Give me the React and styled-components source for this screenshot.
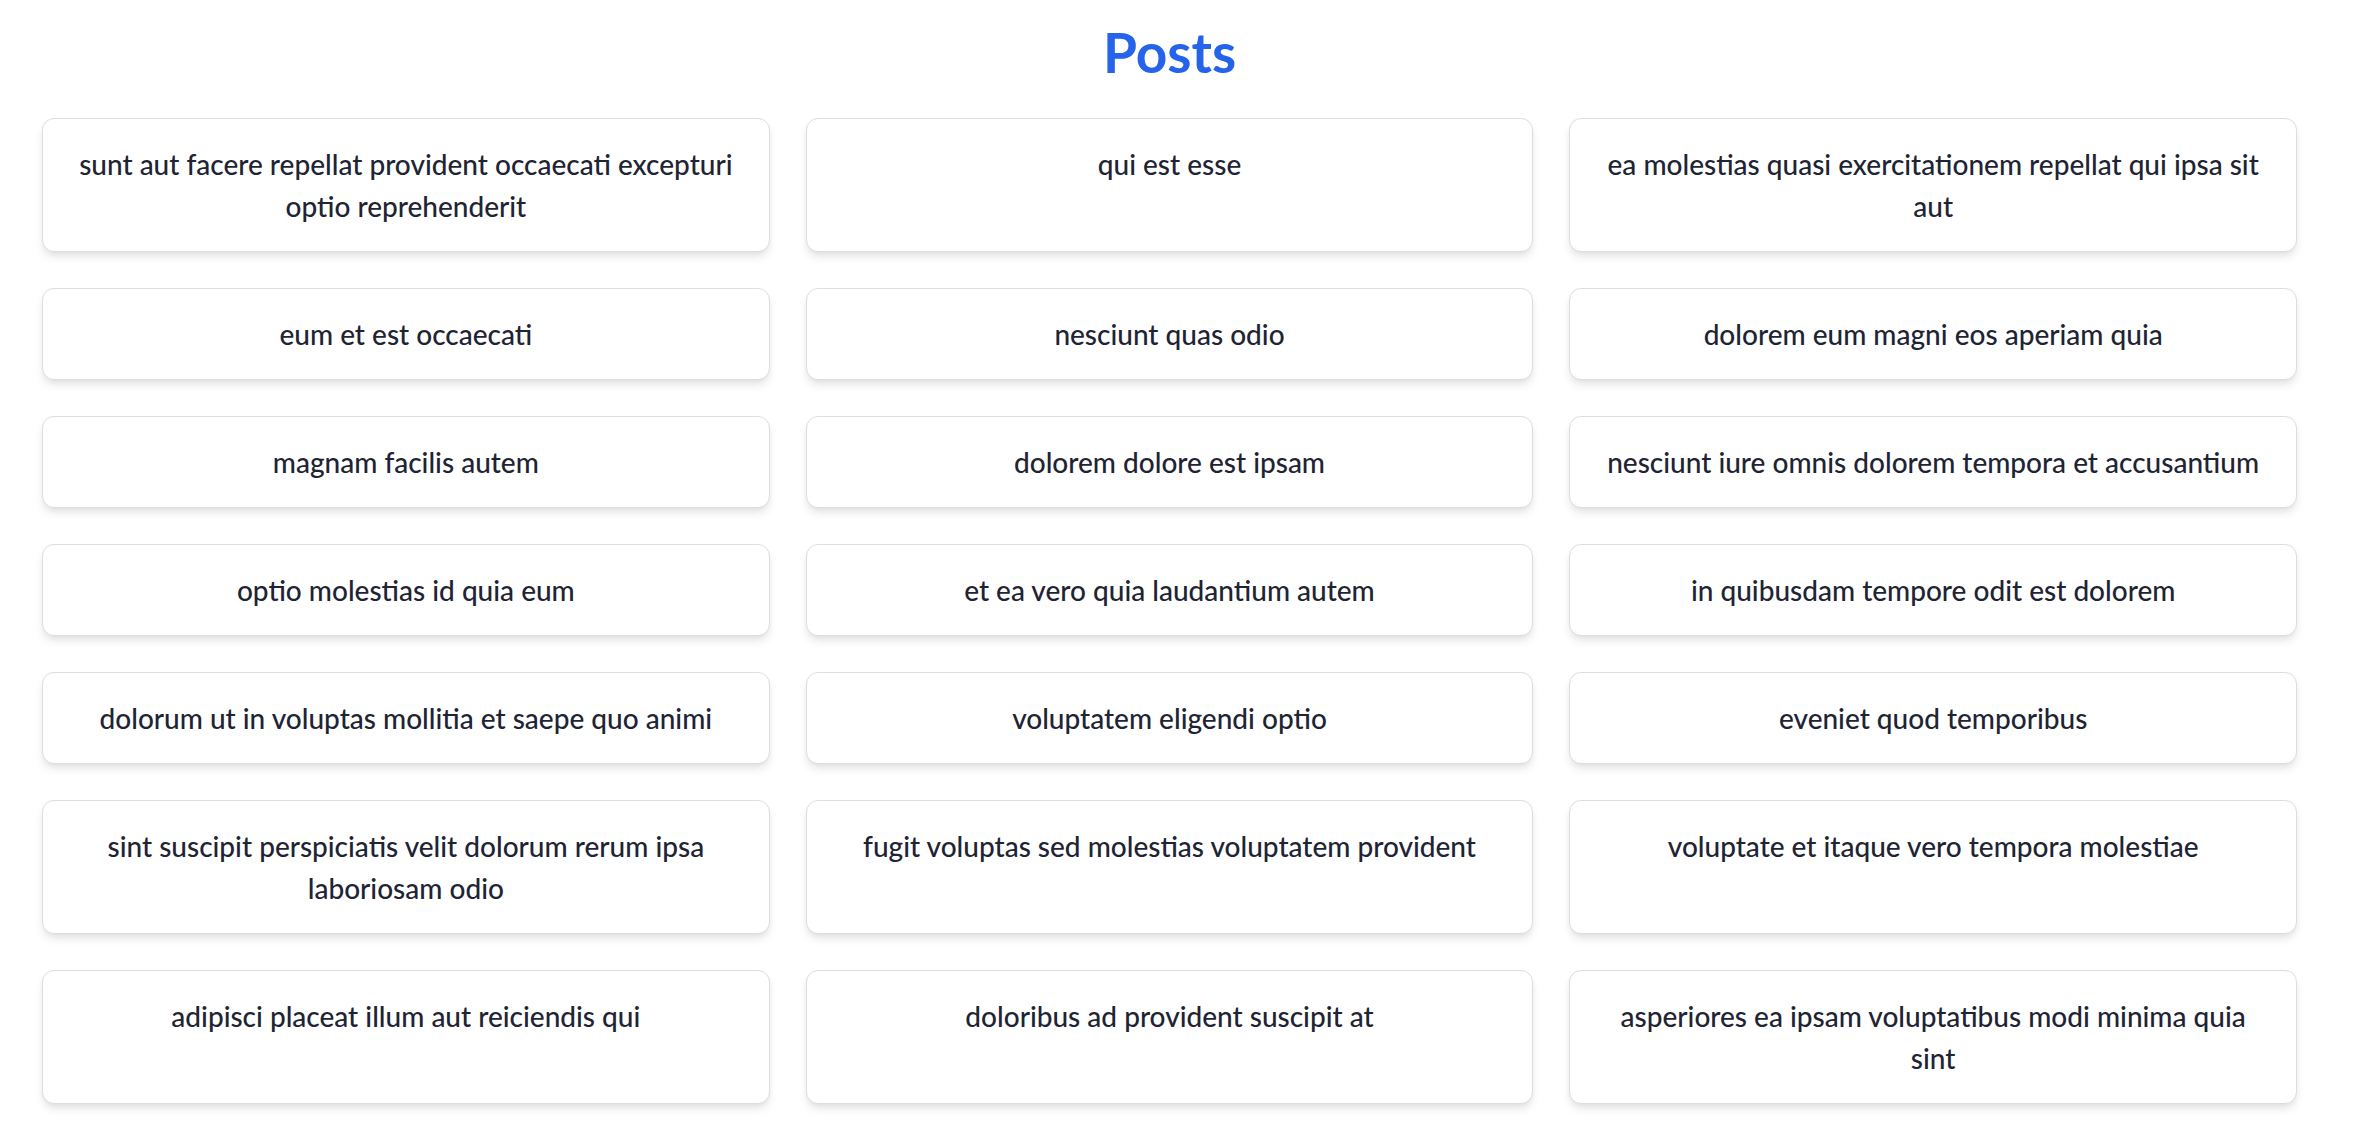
import React from 'react';
import styled, { createGlobalStyle } from 'styled-components';

const GlobalStyle = createGlobalStyle`
  body {
    margin: 0;
    background: #ffffff;
    font-family: Lato, "Noto Sans", "Liberation Sans", sans-serif;
    color: #1f2937;
  }
`;

const Page = styled.main`
  padding: 22px 74px 36px 42px;
`;

const Title = styled.h1`
  margin: 0 0 36px;
  text-align: center;
  font-size: 55px;
  line-height: 60px;
  font-weight: 700;
  color: #2563eb;
`;

const Grid = styled.div`
  display: grid;
  grid-template-columns: repeat(3, 1fr);
  gap: 36px;
`;

const Card = styled.div`
  background: #ffffff;
  border: 1.5px solid #dcdce5;
  border-radius: 12px;
  box-shadow: 0 6px 10px -1px rgba(0, 0, 0, 0.09), 0 3px 6px -2px rgba(0, 0, 0, 0.06);
  padding: 24px 27px;
`;

const CardTitle = styled.h2`
  margin: 0;
  text-align: center;
  font-size: 28px;
  line-height: 42px;
  font-weight: 500;
  color: #1e2433;
`;

const posts = [
  'sunt aut facere repellat provident occaecati excepturi optio reprehenderit',
  'qui est esse',
  'ea molestias quasi exercitationem repellat qui ipsa sit aut',
  'eum et est occaecati',
  'nesciunt quas odio',
  'dolorem eum magni eos aperiam quia',
  'magnam facilis autem',
  'dolorem dolore est ipsam',
  'nesciunt iure omnis dolorem tempora et accusantium',
  'optio molestias id quia eum',
  'et ea vero quia laudantium autem',
  'in quibusdam tempore odit est dolorem',
  'dolorum ut in voluptas mollitia et saepe quo animi',
  'voluptatem eligendi optio',
  'eveniet quod temporibus',
  'sint suscipit perspiciatis velit dolorum rerum ipsa laboriosam odio',
  'fugit voluptas sed molestias voluptatem provident',
  'voluptate et itaque vero tempora molestiae',
  'adipisci placeat illum aut reiciendis qui',
  'doloribus ad provident suscipit at',
  'asperiores ea ipsam voluptatibus modi minima quia sint',
];

const App = () => {
  return (
    <>
      <GlobalStyle />
      <Page>
        <Title>Posts</Title>
        <Grid>
          {posts.map((title, i) => (
            <Card key={i}>
              <CardTitle>{title}</CardTitle>
            </Card>
          ))}
        </Grid>
      </Page>
    </>
  );
};

export default App;
